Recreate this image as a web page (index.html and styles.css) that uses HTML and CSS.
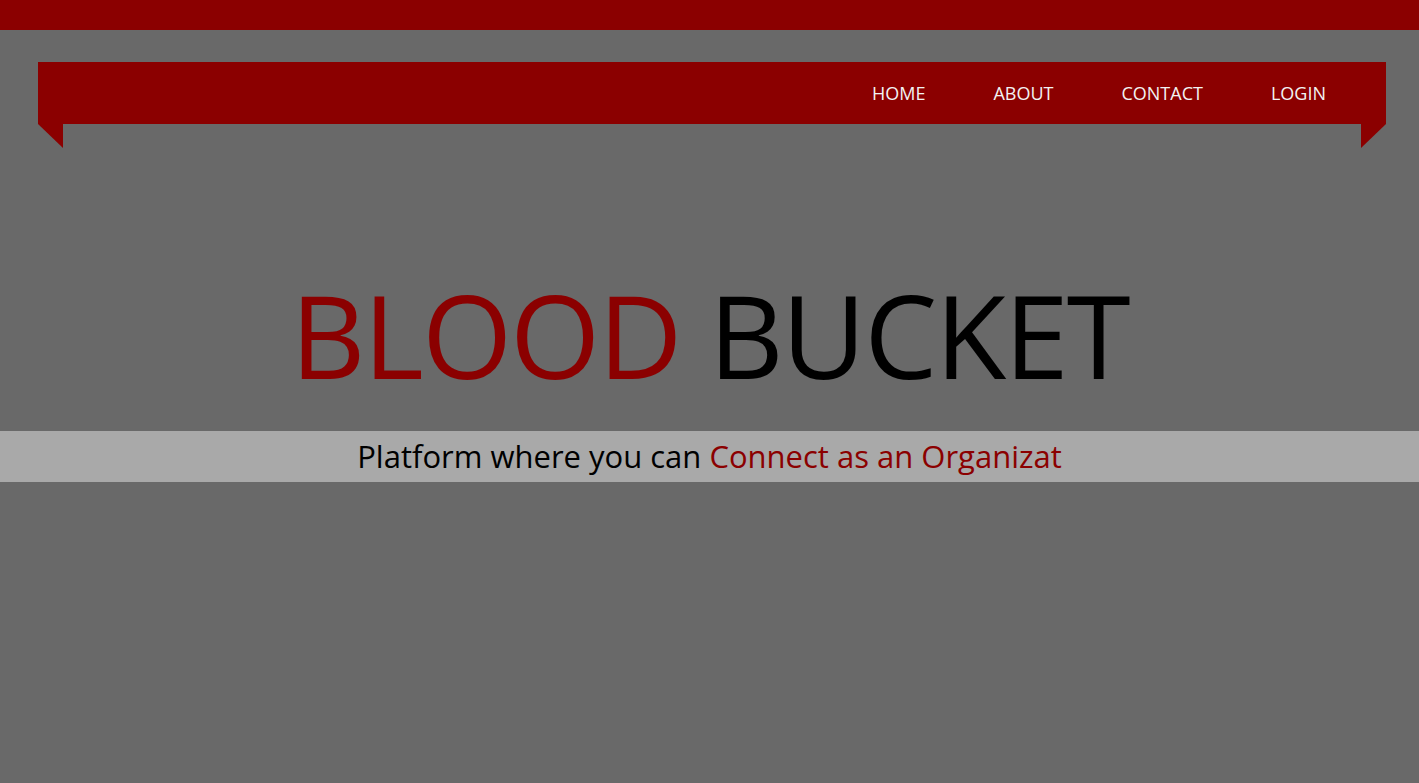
FILE: index.html
```html
<!DOCTYPE html>
<html lang="en">
<head>
<meta charset="utf-8">
<title>Blood Bucket</title>
<link rel="stylesheet" href="styles.css">
</head>
<body>
<div class="topbar"></div>
<header class="ribbon">
  <nav class="nav">
    <a class="nav-link" href="#">HOME</a>
    <a class="nav-link" href="#">ABOUT</a>
    <a class="nav-link" href="#">CONTACT</a>
    <a class="nav-link" href="#">LOGIN</a>
  </nav>
</header>
<main class="hero">
  <h1 class="title"><span class="red">BLOOD</span> BUCKET</h1>
  <div class="band">
    <p class="tagline">Platform where you can <span class="red">Connect as an Organizat</span></p>
  </div>
</main>
</body>
</html>
```
FILE: styles.css
```css
html, body {
  margin: 0;
  padding: 0;
}
body {
  background: #696969;
  font-family: "Open Sans", "Noto Sans", sans-serif;
  color: #000;
  min-height: 783px;
}
.topbar {
  height: 30px;
  background: #8b0000;
}
.ribbon {
  position: relative;
  margin: 32px 33px 0 38px;
  height: 62px;
  background: #8b0000;
}
.ribbon::before,
.ribbon::after {
  content: "";
  position: absolute;
  top: 62px;
  width: 0;
  height: 0;
  border-bottom: 24px solid transparent;
}
.ribbon::before {
  left: 0;
  border-right: 25px solid #8b0000;
}
.ribbon::after {
  right: 0;
  border-left: 25px solid #8b0000;
}
.nav {
  display: flex;
  justify-content: flex-end;
  align-items: center;
  height: 100%;
  padding-right: 26px;
}
.nav-link {
  color: #f2f2f2;
  text-decoration: none;
  font-size: 18px;
  padding: 0 34px;
  line-height: 62px;
}
.hero {
  padding-top: 140px;
}
.title {
  margin: 0;
  text-align: center;
  font-weight: 400;
  font-size: 116px;
  line-height: 140px;
  letter-spacing: -2px;
}
.red {
  color: #8b0000;
}
.band {
  margin-top: 27px;
  background: #a9a9a9;
  height: 51px;
  display: flex;
  align-items: center;
  justify-content: center;
}
.tagline {
  margin: 0;
  font-size: 31px;
  line-height: 51px;
}
```
